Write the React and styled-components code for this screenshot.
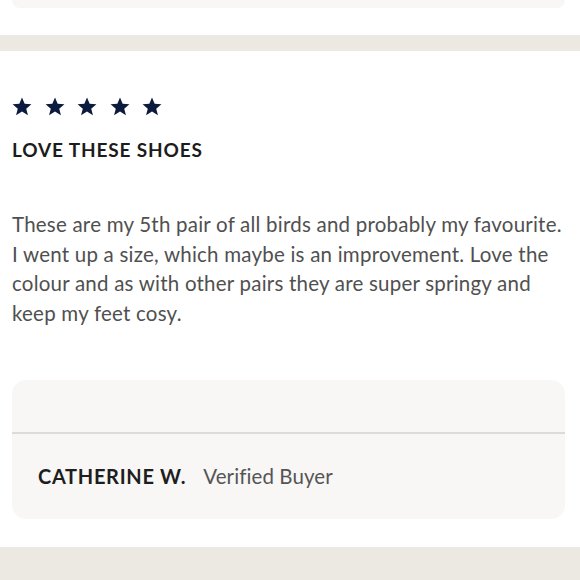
import React from "react";
import styled, { createGlobalStyle } from "styled-components";

const GlobalStyle = createGlobalStyle`
  * { box-sizing: border-box; }
  body {
    margin: 0;
    background: #ffffff;
    font-family: Lato, "Noto Sans", sans-serif;
  }
`;

const Star = () => (
  <svg width="20" height="19" viewBox="0 0 24 23" aria-hidden="true">
    <path
      d="M12 0.6l3.2 7.7 8.2 0.5-6.3 5.3 2.1 8L12 17.7 4.8 22.1l2.1-8L0.6 8.8l8.2-0.5z"
      fill="#0c1a3d"
    />
  </svg>
);

const App = () => {
  return (
    <>
      <GlobalStyle />
      <Page>
        <PrevCard />
        <Band />

        <Review>
          <Stars>
            {[0, 1, 2, 3, 4].map((i) => (
              <Star key={i} />
            ))}
          </Stars>

          <Title>LOVE THESE SHOES</Title>

          <Body>
            These are my 5th pair of all birds and probably my favourite. I went
            up a size, which maybe is an improvement. Love the colour and as
            with other pairs they are super springy and keep my feet cosy.
          </Body>

          <AuthorCard>
            <CardTop />
            <AuthorRow>
              <AuthorName>CATHERINE W.</AuthorName>
              <Verified>Verified Buyer</Verified>
            </AuthorRow>
          </AuthorCard>
        </Review>

        <Band $tall />
      </Page>
    </>
  );
};

export default App;

/* ---------------- Styled Components ---------------- */

const Page = styled.div`
  width: 580px;
  display: flex;
  flex-direction: column;
`;

const PrevCard = styled.div`
  margin: 0 15px 0 12px;
  height: 8px;
  background: #f8f7f5;
  border-radius: 0 0 12px 12px;
`;

const Band = styled.div`
  margin-top: ${(p) => (p.$tall ? "0" : "27px")};
  height: ${(p) => (p.$tall ? "34px" : "16px")};
  background: #ece9e2;
`;

const Review = styled.section`
  padding: 46px 15px 28px 12px;
  display: flex;
  flex-direction: column;
`;

const Stars = styled.div`
  display: flex;
  gap: 12.5px;
  height: 18px;
  align-items: center;
`;

const Title = styled.h2`
  margin: 23px 0 0;
  font-size: 19px;
  font-weight: 700;
  color: #1c1c1c;
  letter-spacing: 0.85px;
  line-height: 24px;
`;

const Body = styled.p`
  margin: 48px 0 0;
  font-size: 20.5px;
  line-height: 29.5px;
  letter-spacing: 0.22px;
  color: #505050;
`;

const AuthorCard = styled.div`
  margin-top: 52px;
  height: 139px;
  background: #f8f7f5;
  border-radius: 14px;
  display: flex;
  flex-direction: column;
  overflow: hidden;
`;

const CardTop = styled.div`
  height: 54px;
  border-bottom: 2px solid #dcdbd8;
`;

const AuthorRow = styled.div`
  flex: 1;
  display: flex;
  align-items: center;
  gap: 17px;
  padding: 0 0 2px 26px;
`;

const AuthorName = styled.span`
  font-size: 20px;
  font-weight: 700;
  color: #1e1e1e;
  letter-spacing: 0.7px;
`;

const Verified = styled.span`
  font-size: 20.5px;
  letter-spacing: 0.1px;
  color: #555555;
`;
